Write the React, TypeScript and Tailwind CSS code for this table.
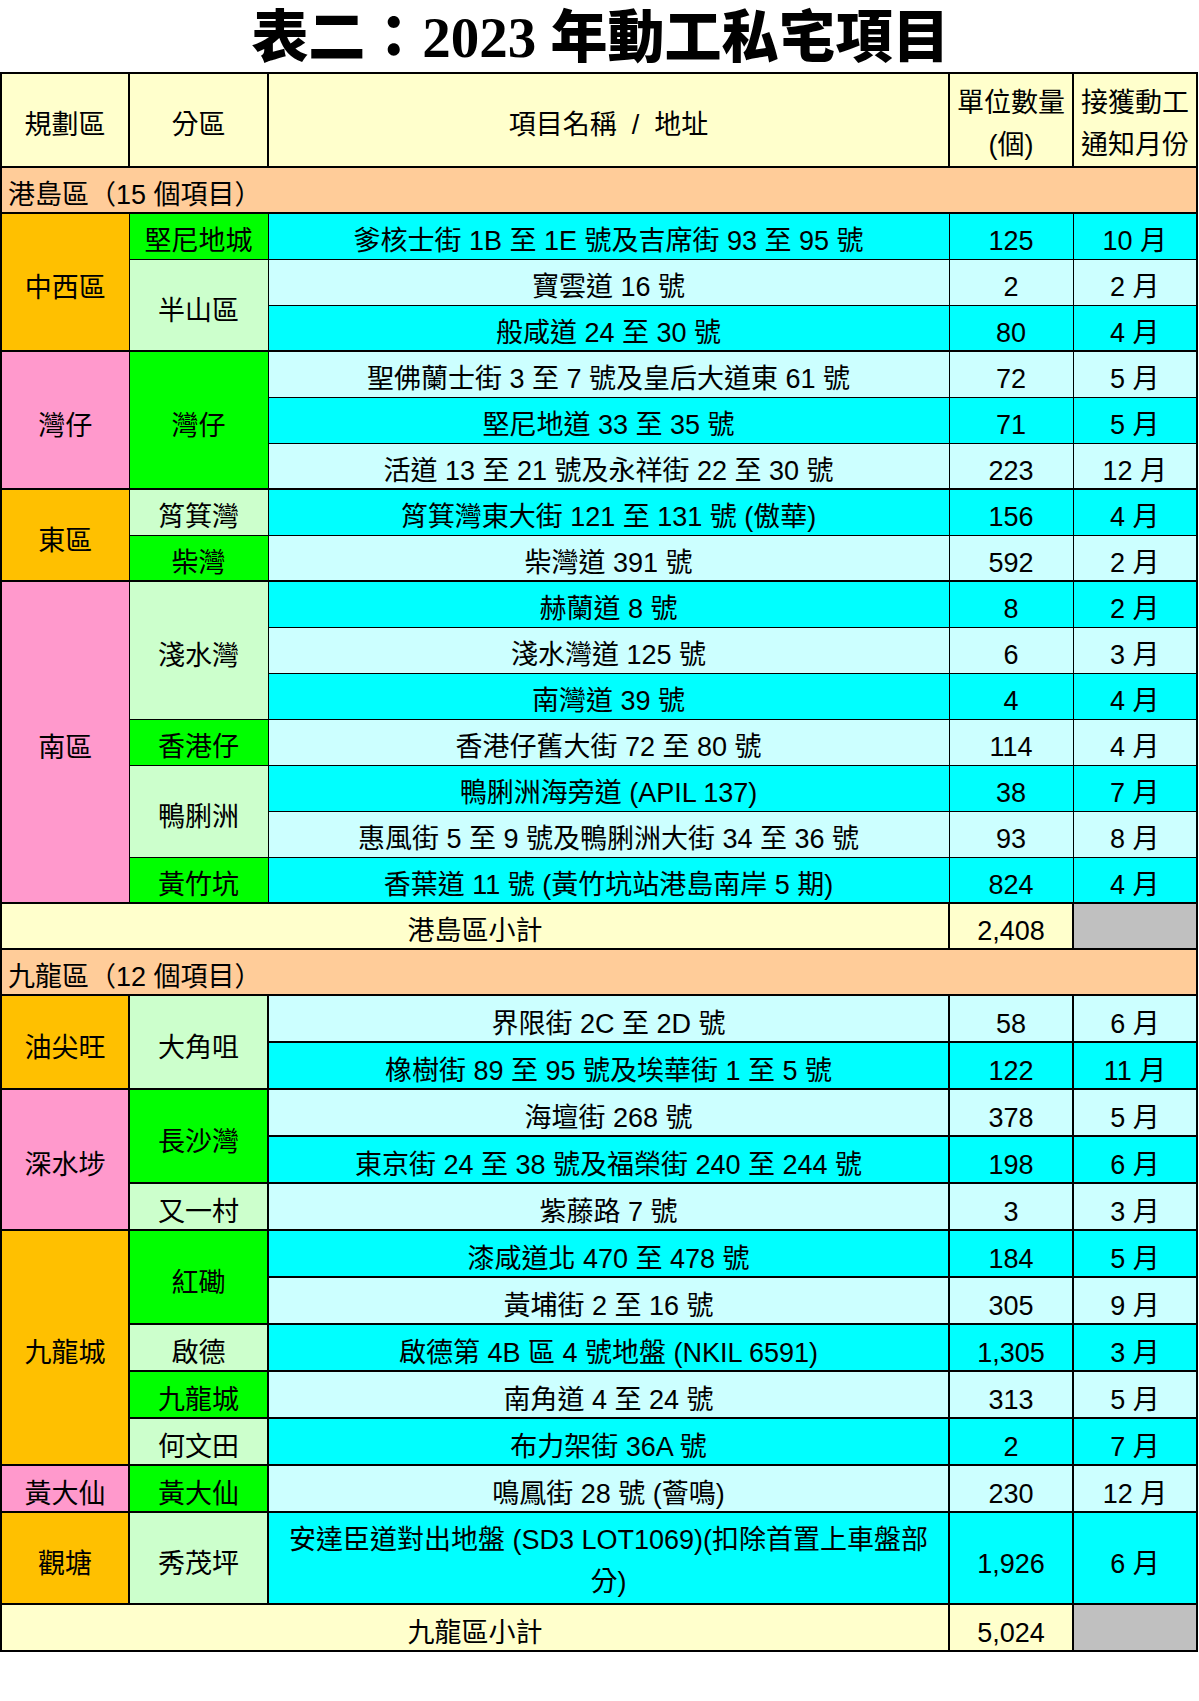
import type { ReactNode } from 'react'

type Row = { addr: ReactNode; units: string; month: string; hi: boolean; tall?: boolean }
type Sub = { name: string; bg: string; rows: Row[] }
type Group = { name: string; bg: string; subs: Sub[] }

const ORANGE = 'bg-[#FFC000]'
const PINK = 'bg-[#FF99CC]'
const GREEN = 'bg-[#00FF00]'
const LIGHT = 'bg-[#CCFFCC]'

const hk: Group[] = [
  {
    name: '中西區', bg: ORANGE, subs: [
      { name: '堅尼地城', bg: GREEN, rows: [{ addr: '爹核士街 1B 至 1E 號及吉席街 93 至 95 號', units: '125', month: '10 月', hi: true }] },
      {
        name: '半山區', bg: LIGHT, rows: [
          { addr: '寶雲道 16 號', units: '2', month: '2 月', hi: false },
          { addr: '般咸道 24 至 30 號', units: '80', month: '4 月', hi: true },
        ],
      },
    ],
  },
  {
    name: '灣仔', bg: PINK, subs: [
      {
        name: '灣仔', bg: GREEN, rows: [
          { addr: '聖佛蘭士街 3 至 7 號及皇后大道東 61 號', units: '72', month: '5 月', hi: false },
          { addr: '堅尼地道 33 至 35 號', units: '71', month: '5 月', hi: true },
          { addr: '活道 13 至 21 號及永祥街 22 至 30 號', units: '223', month: '12 月', hi: false },
        ],
      },
    ],
  },
  {
    name: '東區', bg: ORANGE, subs: [
      { name: '筲箕灣', bg: LIGHT, rows: [{ addr: '筲箕灣東大街 121 至 131 號 (傲華)', units: '156', month: '4 月', hi: true }] },
      { name: '柴灣', bg: GREEN, rows: [{ addr: '柴灣道 391 號', units: '592', month: '2 月', hi: false }] },
    ],
  },
  {
    name: '南區', bg: PINK, subs: [
      {
        name: '淺水灣', bg: LIGHT, rows: [
          { addr: '赫蘭道 8 號', units: '8', month: '2 月', hi: true },
          { addr: '淺水灣道 125 號', units: '6', month: '3 月', hi: false },
          { addr: '南灣道 39 號', units: '4', month: '4 月', hi: true },
        ],
      },
      { name: '香港仔', bg: GREEN, rows: [{ addr: '香港仔舊大街 72 至 80 號', units: '114', month: '4 月', hi: false }] },
      {
        name: '鴨脷洲', bg: LIGHT, rows: [
          { addr: '鴨脷洲海旁道 (APIL 137)', units: '38', month: '7 月', hi: true },
          { addr: '惠風街 5 至 9 號及鴨脷洲大街 34 至 36 號', units: '93', month: '8 月', hi: false },
        ],
      },
      { name: '黃竹坑', bg: GREEN, rows: [{ addr: '香葉道 11 號 (黃竹坑站港島南岸 5 期)', units: '824', month: '4 月', hi: true }] },
    ],
  },
]

const kln: Group[] = [
  {
    name: '油尖旺', bg: ORANGE, subs: [
      {
        name: '大角咀', bg: LIGHT, rows: [
          { addr: '界限街 2C 至 2D 號', units: '58', month: '6 月', hi: false },
          { addr: '橡樹街 89 至 95 號及埃華街 1 至 5 號', units: '122', month: '11 月', hi: true },
        ],
      },
    ],
  },
  {
    name: '深水埗', bg: PINK, subs: [
      {
        name: '長沙灣', bg: GREEN, rows: [
          { addr: '海壇街 268 號', units: '378', month: '5 月', hi: false },
          { addr: '東京街 24 至 38 號及福榮街 240 至 244 號', units: '198', month: '6 月', hi: true },
        ],
      },
      { name: '又一村', bg: LIGHT, rows: [{ addr: '紫藤路 7 號', units: '3', month: '3 月', hi: false }] },
    ],
  },
  {
    name: '九龍城', bg: ORANGE, subs: [
      {
        name: '紅磡', bg: GREEN, rows: [
          { addr: '漆咸道北 470 至 478 號', units: '184', month: '5 月', hi: true },
          { addr: '黃埔街 2 至 16 號', units: '305', month: '9 月', hi: false },
        ],
      },
      { name: '啟德', bg: LIGHT, rows: [{ addr: '啟德第 4B 區 4 號地盤 (NKIL 6591)', units: '1,305', month: '3 月', hi: true }] },
      { name: '九龍城', bg: GREEN, rows: [{ addr: '南角道 4 至 24 號', units: '313', month: '5 月', hi: false }] },
      { name: '何文田', bg: LIGHT, rows: [{ addr: '布力架街 36A 號', units: '2', month: '7 月', hi: true }] },
    ],
  },
  {
    name: '黃大仙', bg: PINK, subs: [
      { name: '黃大仙', bg: GREEN, rows: [{ addr: '鳴鳳街 28 號 (薈鳴)', units: '230', month: '12 月', hi: false }] },
    ],
  },
  {
    name: '觀塘', bg: ORANGE, subs: [
      {
        name: '秀茂坪', bg: LIGHT, rows: [
          {
            addr: <>安達臣道對出地盤 (SD3 LOT1069)(扣除首置上車盤部<br />分)</>,
            units: '1,926', month: '6 月', hi: true, tall: true,
          },
        ],
      },
    ],
  },
]

function Region({ groups, heavy }: { groups: Group[]; heavy: boolean }) {
  const line = heavy ? 'border-2 border-black' : 'border border-black'
  const rows: ReactNode[] = []
  groups.forEach((g, gi) => {
    const total = g.subs.reduce((n, s) => n + s.rows.length, 0)
    g.subs.forEach((s, si) => {
      s.rows.forEach((r, ri) => {
        const firstOfGroup = si === 0 && ri === 0
        const top = firstOfGroup ? 'border-t-2' : ''
        const single = r.tall ? 'align-middle pt-[5px] pb-0' : 'align-bottom pb-[1px]'
        const merged = 'align-middle pt-[12px]'
        const rowBg = r.hi ? 'bg-[#00FFFF]' : 'bg-[#CCFFFF]'
        rows.push(
          <tr key={`${gi}-${si}-${ri}`} className={r.tall ? 'h-[92px]' : heavy ? 'h-[47px]' : 'h-[46px]'}>
            {firstOfGroup && (
              <td rowSpan={total} className={`${line} ${top} ${g.bg} text-center ${total > 1 || r.tall ? merged : single}`}>
                {g.name}
              </td>
            )}
            {ri === 0 && (
              <td
                rowSpan={s.rows.length}
                className={`${line} ${top} ${s.bg} text-center ${s.rows.length > 1 || r.tall ? merged : single}`}
              >
                {s.name}
              </td>
            )}
            <td className={`${line} ${top} ${rowBg} text-center ${single} ${r.tall ? 'leading-[42px]' : ''}`}>{r.addr}</td>
            <td className={`${line} ${top} ${rowBg} text-center ${r.tall ? merged : single}`}>{r.units}</td>
            <td className={`${line} ${top} ${rowBg} text-center ${r.tall ? merged : single}`}>{r.month}</td>
          </tr>,
        )
      })
    })
  })
  return <>{rows}</>
}

function SectionRow({ label, h }: { label: string; h: string }) {
  return (
    <tr className={h}>
      <td colSpan={5} className="border-2 border-black bg-[#FFCC99] pl-[6px] pb-[1px] text-left align-bottom">
        {label}
      </td>
    </tr>
  )
}

function SubtotalRow({ label, total, h }: { label: string; total: string; h: string }) {
  return (
    <tr className={h}>
      <td colSpan={3} className="border-2 border-black bg-[#FFFFCC] pb-[1px] text-center align-bottom">
        {label}
      </td>
      <td className="border-2 border-black bg-[#FFFFCC] pb-[1px] text-center align-bottom">{total}</td>
      <td className="border-2 border-black bg-[#C0C0C0]" />
    </tr>
  )
}

export default function App() {
  return (
    <div className="w-[1199px] bg-white font-['Liberation_Sans','Noto_Sans_CJK_TC',sans-serif] text-black">
      <h1 className="flex h-[72px] items-center justify-center pt-[2px] pl-[2px] font-['Liberation_Serif','Noto_Sans_CJK_TC',serif] text-[57px] font-black leading-none">
        表二：2023 年動工私宅項目
      </h1>
      <table className="w-[1196px] table-fixed border-collapse border-2 border-black text-[27px] leading-[1.2]">
        <colgroup>
          <col className="w-[128px]" />
          <col className="w-[139px]" />
          <col className="w-[681px]" />
          <col className="w-[124px]" />
          <col className="w-[124px]" />
        </colgroup>
        <thead>
          <tr className="h-[94px] bg-[#FFFFCC]">
            <th className="border-2 border-black pt-[10px] text-center align-middle font-normal">規劃區</th>
            <th className="border-2 border-black pt-[10px] text-center align-middle font-normal">分區</th>
            <th className="border-2 border-black pt-[10px] text-center align-middle font-normal whitespace-pre">
              項目名稱  /  地址
            </th>
            <th className="border-2 border-black pt-[8px] text-center align-middle font-normal leading-[42px] whitespace-nowrap">
              單位數量
              <br />
              (個)
            </th>
            <th className="border-2 border-black pt-[8px] text-center align-middle font-normal leading-[42px] whitespace-nowrap">
              接獲動工
              <br />
              通知月份
            </th>
          </tr>
        </thead>
        <tbody>
          <SectionRow label="港島區（15 個項目）" h="h-[46px]" />
          <Region groups={hk} heavy={false} />
          <SubtotalRow label="港島區小計" total="2,408" h="h-[46px]" />
          <SectionRow label="九龍區（12 個項目）" h="h-[46px]" />
          <Region groups={kln} heavy />
          <SubtotalRow label="九龍區小計" total="5,024" h="h-[47px]" />
        </tbody>
      </table>
      <div className="h-[50px]" />
    </div>
  )
}
